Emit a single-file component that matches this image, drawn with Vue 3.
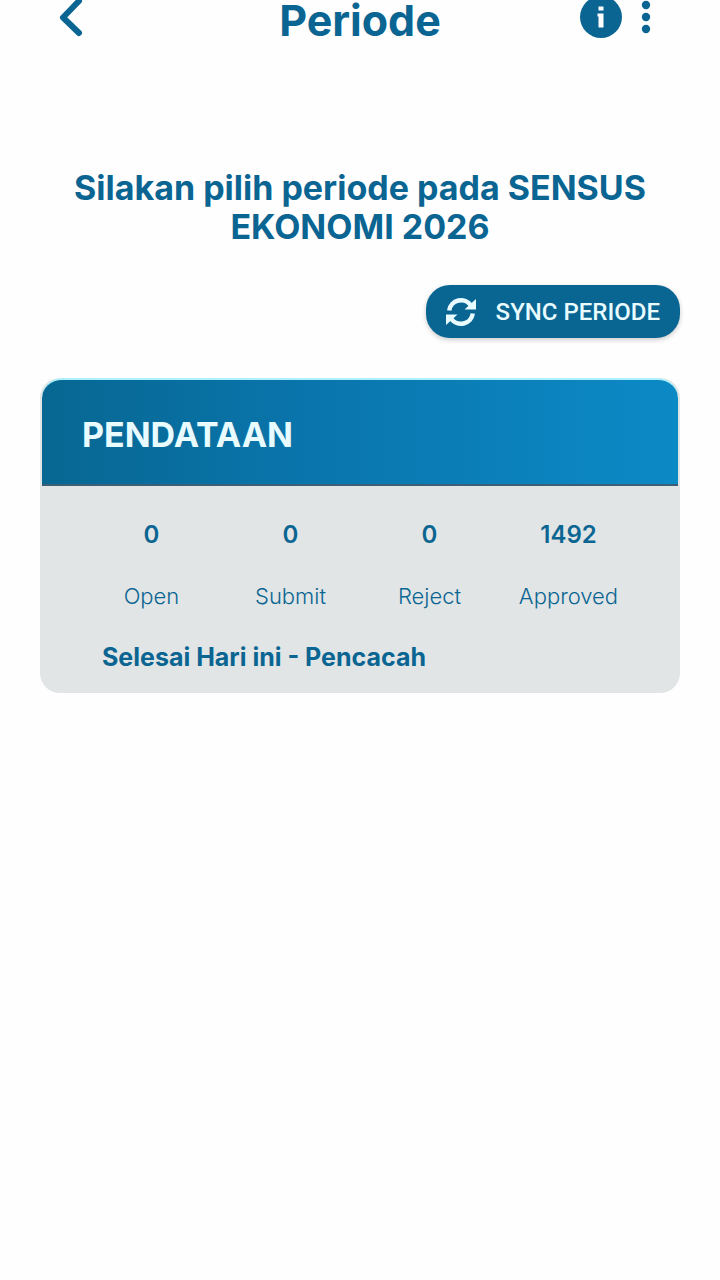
<template>
  <div class="page">
    <header class="topbar">
      <button class="icon-btn" type="button" aria-label="Kembali">
        <svg width="26" height="40" viewBox="0 0 26 40">
          <path d="M21 4L5 20.500L21 36" fill="none" stroke="currentColor" stroke-width="6" stroke-linecap="round" stroke-linejoin="round" />
        </svg>
      </button>
      <h1 class="title">Periode</h1>
      <div class="actions">
        <button class="icon-btn" type="button" aria-label="Informasi">
          <svg width="42" height="42" viewBox="0 0 42 42">
            <circle cx="21" cy="21" r="21" fill="currentColor" />
            <path d="M18.500 10.500h5v4h-5zM17.500 17.500h6v14h-5v-11h-1z" fill="#fff" />
          </svg>
        </button>
        <button class="icon-btn" type="button" aria-label="Menu">
          <svg width="10" height="34" viewBox="0 0 10 34">
            <circle cx="5" cy="5" r="4.200" fill="currentColor" />
            <circle cx="5" cy="17" r="4.200" fill="currentColor" />
            <circle cx="5" cy="29" r="4.200" fill="currentColor" />
          </svg>
        </button>
      </div>
    </header>

    <main class="content">
      <h2 class="prompt">Silakan pilih periode pada SENSUS EKONOMI 2026</h2>

      <button class="sync-btn" type="button">
        <svg width="30" height="30" viewBox="0 0 30 30">
          <path d="M3.200 13.500A12 12 0 0 1 25 8.500" fill="none" stroke="currentColor" stroke-width="4.500" />
          <path d="M30 2v10.500H18.500z" fill="currentColor" />
          <path d="M26.800 16.500A12 12 0 0 1 5 21.500" fill="none" stroke="currentColor" stroke-width="4.500" />
          <path d="M0 28V17.500h11.500z" fill="currentColor" />
        </svg>
        <span>SYNC PERIODE</span>
      </button>

      <section class="card">
        <h3 class="card-head">{{ period.name }}</h3>
        <dl class="stats">
          <div v-for="stat in period.stats" :key="stat.label" class="stat">
            <dt>{{ stat.label }}</dt>
            <dd>{{ stat.value }}</dd>
          </div>
        </dl>
        <p class="note">{{ period.note }}</p>
      </section>
    </main>
  </div>
</template>

<script setup>
const period = {
  name: 'PENDATAAN',
  stats: [
    { label: 'Open', value: 0 },
    { label: 'Submit', value: 0 },
    { label: 'Reject', value: 0 },
    { label: 'Approved', value: 1492 },
  ],
  note: 'Selesai Hari ini - Pencacah',
}
</script>

<style>
body {
  margin: 0;
  background: #fefefe;
}
</style>

<style scoped>
.page {
  min-height: 100vh;
  overflow: hidden;
  font-family: Inter, "Open Sans", sans-serif;
  color: #0b6592;
}

h1,
h2,
h3,
p,
dl,
dd {
  margin: 0;
}

button {
  border: 0;
  font: inherit;
  cursor: pointer;
}

.topbar {
  display: grid;
  grid-template-columns: 1fr auto 1fr;
  grid-template-rows: 34px;
  align-items: center;
  height: 36px;
  padding: 0 58px;
}

.icon-btn {
  display: flex;
  justify-self: start;
  padding: 0;
  background: none;
  color: inherit;
}

.title {
  align-self: start;
  font-size: 43px;
  line-height: 40px;
  font-weight: 700;
}

.actions {
  display: flex;
  align-items: center;
  justify-self: end;
  gap: 19px;
  margin-right: 11px;
}

.content {
  display: flex;
  flex-direction: column;
  padding: 132px 40px 40px;
}

.prompt {
  font-size: 34px;
  line-height: 39px;
  font-weight: 700;
  text-align: center;
}

.sync-btn {
  display: flex;
  align-items: center;
  align-self: flex-end;
  gap: 20px;
  height: 53px;
  margin-top: 39px;
  padding: 0 20px;
  border-radius: 24px;
  background: #096592;
  color: #e8fbff;
  font-family: Roboto, sans-serif;
  font-size: 24px;
  font-weight: 500;
  box-shadow: 0 2px 5px rgba(0, 0, 0, 0.2);
}

.card {
  margin-top: 40px;
  border-radius: 20px;
  background: #e1e5e6;
  overflow: hidden;
}

.card-head {
  margin: 0 2px;
  padding: 37px 40px 31px;
  border-top: 2px solid #aef0fc;
  border-bottom: 2px solid #3c5f75;
  border-radius: 20px 20px 0 0;
  background: linear-gradient(90deg, #076792, #0a76ae 45%, #0c8ac6);
  color: #e8fbff;
  font-size: 34px;
  line-height: 36px;
  font-weight: 700;
}

.stats {
  display: grid;
  grid-template-columns: repeat(4, 1fr);
  padding: 33px 42px 0;
  text-align: center;
}

.stat {
  display: flex;
  flex-direction: column-reverse;
  gap: 30px;
}

.stat dt {
  font-size: 22px;
  line-height: 30px;
  font-weight: 300;
}

.stat dd {
  font-size: 24px;
  line-height: 32px;
  font-weight: 600;
}

.note {
  padding: 30px 62px 20px;
  font-size: 25px;
  line-height: 32px;
  font-weight: 700;
}
</style>
